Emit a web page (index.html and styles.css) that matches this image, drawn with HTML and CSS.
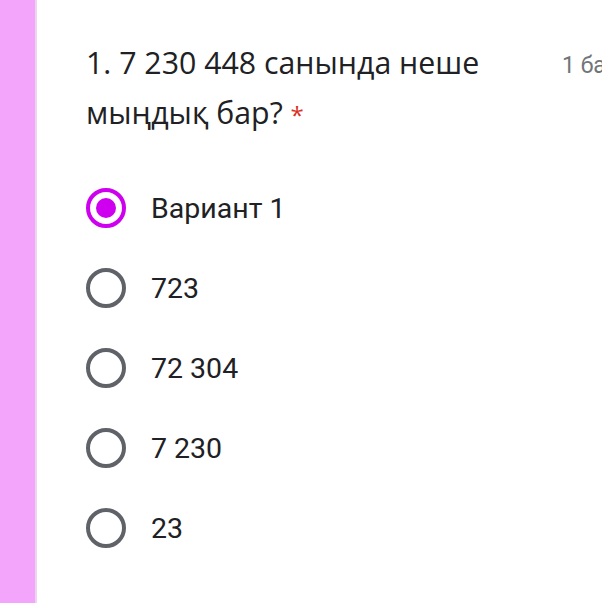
FILE: index.html
```html
<!DOCTYPE html>
<html lang="kk">
<head>
<meta charset="utf-8">
<link rel="stylesheet" href="styles.css">
</head>
<body>
<div class="page">
  <div class="strip"></div>
  <main class="card">
    <div class="header">
      <div class="title">1. 7 230 448 санында неше мыңдық бар? <span class="req">*</span></div>
      <div class="points">1 балл</div>
    </div>
    <div class="options">
      <label class="option"><span class="radio checked"><span class="dot"></span></span><span class="label">Вариант 1</span></label>
      <label class="option"><span class="radio"></span><span class="label">723</span></label>
      <label class="option"><span class="radio"></span><span class="label">72 304</span></label>
      <label class="option"><span class="radio"></span><span class="label">7 230</span></label>
      <label class="option"><span class="radio"></span><span class="label">23</span></label>
    </div>
  </main>
</div>
</body>
</html>
```
FILE: styles.css
```css
html, body {
  margin: 0;
  padding: 0;
  background: #ffffff;
  overflow: hidden;
}
.page {
  display: flex;
  width: 602px;
  height: 603px;
}
.strip {
  flex: 0 0 35px;
  background: #f3a4fb;
  border-right: 2px solid #ecd6ef;
}
.card {
  flex: 1;
  padding: 38px 0 0 49px;
  min-width: 0;
}
.header {
  display: flex;
  align-items: flex-start;
  gap: 26px;
  white-space: nowrap;
}
.title {
  flex: 0 0 450px;
  white-space: normal;
  font-family: "Open Sans", sans-serif;
  font-size: 30.3px;
  line-height: 50px;
  color: #202124;
}
.req {
  color: #d93025;
  font-size: 24px;
}
.points {
  font-family: Roboto, sans-serif;
  font-size: 23px;
  line-height: 56px;
  color: #70757a;
}
.options {
  display: flex;
  flex-direction: column;
  margin-top: 28px;
}
.option {
  display: flex;
  align-items: center;
  height: 80px;
  gap: 25px;
}
.radio {
  box-sizing: border-box;
  width: 40px;
  height: 40px;
  border: 4px solid #5f6368;
  border-radius: 50%;
  display: flex;
  align-items: center;
  justify-content: center;
}
.radio.checked {
  border-color: #cf00f0;
}
.dot {
  width: 20px;
  height: 20px;
  border-radius: 50%;
  background: #cf00f0;
}
.label {
  font-family: Roboto, sans-serif;
  font-size: 28.5px;
  color: #202124;
}
```
